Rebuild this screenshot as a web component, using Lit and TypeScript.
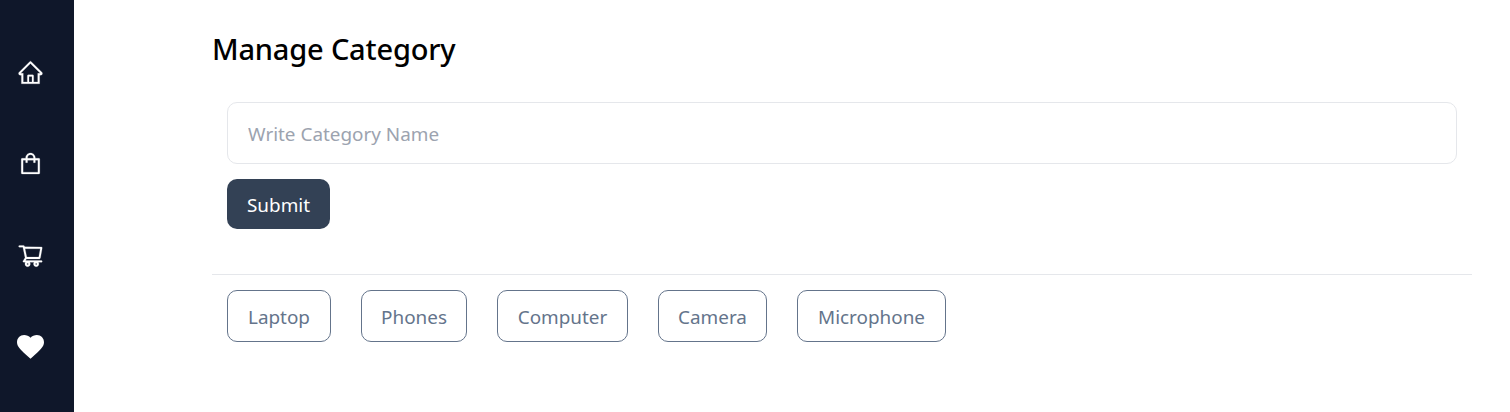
import { LitElement, html, css, svg } from "lit";
import { customElement } from "lit/decorators.js";

const icons = [
  { name: "Home", box: "0 0 1024 1024", d: "M946.5 505L560.1 118.8l-25.9-25.9a31.5 31.5 0 0 0-44.4 0L77.5 505a63.9 63.9 0 0 0-18.8 46c.4 35.2 29.7 63.3 64.9 63.3h42.5V940h691.8V614.3h43.4c17.1 0 33.2-6.7 45.3-18.8a63.6 63.6 0 0 0 18.7-45.3c0-17-6.7-33.1-18.8-45.2zM568 868H456V664h112v204zm217.9-325.7V868H632V640c0-22.1-17.9-40-40-40H432c-22.1 0-40 17.9-40 40v228H238.1V542.3h-96l370-369.7 23.1 23.1L882 542.3h-96.1z" },
  { name: "Products", box: "0 0 1024 1024", d: "M832 312H696v-16c0-101.6-82.4-184-184-184s-184 82.4-184 184v16H192c-17.7 0-32 14.3-32 32v536c0 17.7 14.3 32 32 32h640c17.7 0 32-14.3 32-32V344c0-17.7-14.3-32-32-32zm-432-16c0-61.9 50.1-112 112-112s112 50.1 112 112v16H400v-16zm392 544H232V384h96v88c0 4.4 3.6 8 8 8h56c4.4 0 8-3.6 8-8v-88h224v88c0 4.4 3.6 8 8 8h56c4.4 0 8-3.6 8-8v-88h96v456z" },
  { name: "Cart", box: "0 0 1024 1024", d: "M922.9 701.9H327.4l29.9-60.9 496.8-.9c16.8 0 31.2-12 34.2-28.6l68.8-385.1c1.8-10.1-.9-20.5-7.5-28.4a34.99 34.99 0 0 0-26.6-12.5l-632-2.1-5.4-25.4c-3.4-16.2-18-28-34.6-28H96.5a35.3 35.3 0 1 0 0 70.6h125.9L246 312.8l58.1 281.3-74.8 122.1a34.96 34.96 0 0 0-3 36.8c6 11.9 18.1 19.4 31.5 19.4h62.8a102.43 102.43 0 0 0-20.6 61.7c0 56.6 46 102.6 102.6 102.6s102.6-46 102.6-102.6c0-22.3-7.4-44-20.6-61.7h161.1a102.43 102.43 0 0 0-20.6 61.7c0 56.6 46 102.6 102.6 102.6s102.6-46 102.6-102.6c0-22.3-7.4-44-20.6-61.7H923c19.4 0 35.3-15.8 35.3-35.3a35.42 35.42 0 0 0-35.4-35.2zM305.7 253l575.8 1.9-56.4 315.8-452.3.8L305.7 253zm96.9 612.7c-17.4 0-31.6-14.2-31.6-31.6 0-17.4 14.2-31.6 31.6-31.6s31.6 14.2 31.6 31.6a31.6 31.6 0 0 1-31.6 31.6zm325.1 0c-17.4 0-31.6-14.2-31.6-31.6 0-17.4 14.2-31.6 31.6-31.6s31.6 14.2 31.6 31.6a31.6 31.6 0 0 1-31.6 31.6z" },
  { name: "Favorites", box: "48 48 416 416", d: "M256 444l-30.164-27.211C118.718 322 48 262 48 190 48 129 95 80 158 80c38 0 73 15 98 43C281 95 316 80 354 80 417 80 464 129 464 190c0 72-70.719 132-177.836 226.789L256 444z" },
];

const categories = [
  { label: "Laptop", width: 104 },
  { label: "Phones", width: 106 },
  { label: "Computer", width: 131 },
  { label: "Camera", width: 109 },
  { label: "Microphone", width: 149 },
];

@customElement("app-root")
export class AppRoot extends LitElement {
  static styles = css`
    :host { display: flex; height: 412px; overflow: hidden; background: #fff; font-family: "Segoe UI", "Noto Sans", "Open Sans", sans-serif; font-size: 18.9px; }
    * { box-sizing: border-box; }
    .side { width: 74px; flex: none; background: #0f172a; padding: 59px 0 0 17px; display: flex; flex-direction: column; gap: 64.3px; }
    .icon { width: 27px; height: 27px; flex: none; fill: #fff; stroke: #fff; stroke-width: 8; display: block; overflow: visible; }
    .icon:last-child { stroke: none; }
    .main { flex: 1; padding: 29px 38px 0 138px; }
    .title { margin: 0; font-size: 29px; line-height: 40px; font-weight: 500; color: #000; letter-spacing: -0.18px; }
    .form { padding: 33px 15px 45px; border-bottom: 1px solid #e5e7eb; display: flex; flex-direction: column; align-items: flex-start; gap: 15px; }
    .field { width: 100%; height: 62px; border: 1px solid #e5e7eb; border-radius: 10px; padding: 2px 20px 0; font: inherit; outline: none; background: #fff; }
    .field::placeholder { color: #9ca3af; opacity: 1; }
    .submit { width: 103px; height: 50px; border: 0; border-radius: 10px; padding: 2px 0 0; background: #334155; color: #fff; font: inherit; }
    .list { display: flex; gap: 30px; padding: 15px; }
    .chip { height: 52px; border: 1px solid #64748b; border-radius: 10px; background: #fff; color: #64748b; font: inherit; padding: 2px 0 0; white-space: nowrap; }
  `;

  render() {
    return html`
      <nav class="side">
        ${icons.map((i) => html`<svg class="icon" viewBox=${i.box} aria-label=${i.name}>${svg`<path d=${i.d}></path>`}</svg>`)}
      </nav>
      <main class="main">
        <h1 class="title">Manage Category</h1>
        <div class="form">
          <input class="field" placeholder="Write Category Name" />
          <button class="submit">Submit</button>
        </div>
        <div class="list">
          ${categories.map((c) => html`<button class="chip" style="width:${c.width}px">${c.label}</button>`)}
        </div>
      </main>
    `;
  }
}
